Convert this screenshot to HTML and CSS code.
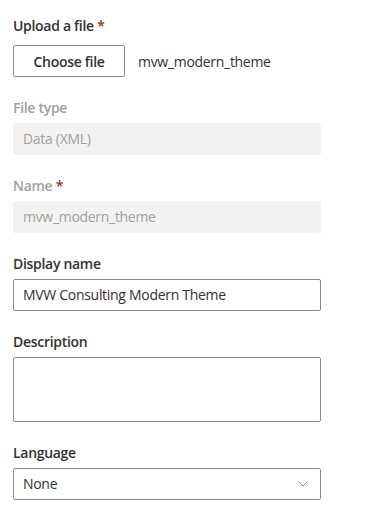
FILE: index.html
```html
<!DOCTYPE html>
<html lang="en">
<head>
  <meta charset="UTF-8">
  <title>Upload a file</title>
  <link rel="stylesheet" href="styles.css">
</head>
<body>

  <form class="panel">

    <div class="field">
      <label class="label">Upload a file <span class="req">*</span></label>
      <div class="upload-row">
        <button type="button" class="btn">Choose file</button>
        <span class="file-name">mvw_modern_theme</span>
      </div>
    </div>

    <div class="field">
      <label class="label disabled">File type</label>
      <div class="input readonly">Data (XML)</div>
    </div>

    <div class="field">
      <label class="label disabled">Name <span class="req">*</span></label>
      <div class="input readonly">mvw_modern_theme</div>
    </div>

    <div class="field">
      <label class="label">Display name</label>
      <div class="input">MVW Consulting Modern Theme</div>
    </div>

    <div class="field">
      <label class="label">Description</label>
      <div class="input textarea"></div>
    </div>

    <div class="field">
      <label class="label">Language</label>
      <div class="input select">
        <span>None</span>
        <svg class="chevron" width="10" height="6" viewBox="0 0 10 6">
          <path d="M0.5 0.5 L5 5 L9.5 0.5" fill="none" stroke="#8a8886" stroke-width="1"/>
        </svg>
      </div>
    </div>

  </form>

</body>
</html>
```

FILE: styles.css
```css
* {
  margin: 0;
  padding: 0;
  box-sizing: border-box;
}

html, body {
  background-color: #ffffff;
  font-family: 'Open Sans', 'Noto Sans', sans-serif;
  font-size: 14px;
  letter-spacing: -0.3px;
  color: #323130;
}

.panel {
  padding: 11px 13px 0 13px;
  width: 334px;
}

.field {
  margin-bottom: 16px;
}

.label {
  display: block;
  padding: 5px 0;
  line-height: 20px;
  font-weight: 600;
  color: #323130;
}

.label.disabled {
  color: #a19f9d;
}

.req {
  color: #a4262c;
}

.upload-row {
  display: flex;
  align-items: center;
  gap: 13px;
  margin-top: 4px;
}

.btn {
  width: 112px;
  height: 32px;
  background: #ffffff;
  border: 1px solid #8a8886;
  border-radius: 2px;
  font-family: inherit;
  font-size: 14px;
  font-weight: 600;
  letter-spacing: -0.3px;
  color: #323130;
}

.file-name {
  color: #323130;
}

.input {
  height: 32px;
  border: 1px solid #8a8886;
  border-radius: 2px;
  padding: 0 9px;
  line-height: 30px;
  color: #323130;
}

.input.readonly {
  background-color: #f3f2f1;
  border-color: #f3f2f1;
  color: #a19f9d;
}

.input.textarea {
  height: 65px;
}

.input.select {
  display: flex;
  align-items: center;
  justify-content: space-between;
  padding-right: 12px;
}

.chevron {
  display: block;
}
```
